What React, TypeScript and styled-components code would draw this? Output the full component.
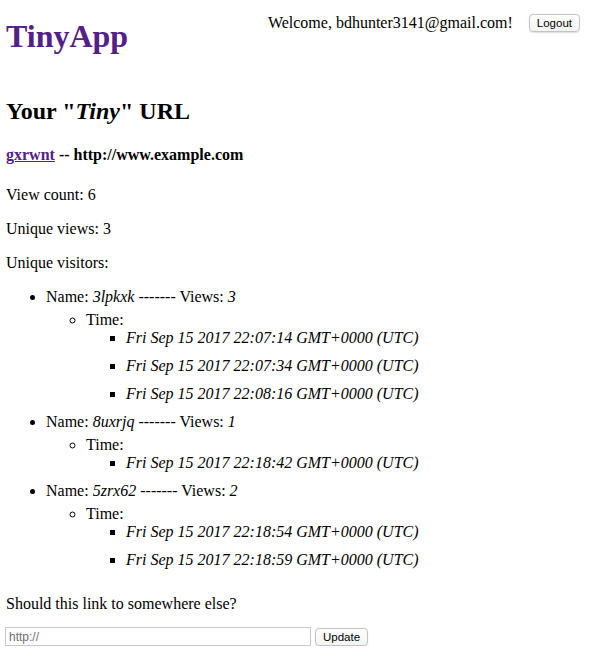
import React, { useState } from 'react';
import styled, { createGlobalStyle } from 'styled-components';

interface Visitor {
  name: string;
  times: string[];
}

const visitors: Visitor[] = [
  {
    name: '3lpkxk',
    times: [
      'Fri Sep 15 2017 22:07:14 GMT+0000 (UTC)',
      'Fri Sep 15 2017 22:07:34 GMT+0000 (UTC)',
      'Fri Sep 15 2017 22:08:16 GMT+0000 (UTC)',
    ],
  },
  {
    name: '8uxrjq',
    times: ['Fri Sep 15 2017 22:18:42 GMT+0000 (UTC)'],
  },
  {
    name: '5zrx62',
    times: [
      'Fri Sep 15 2017 22:18:54 GMT+0000 (UTC)',
      'Fri Sep 15 2017 22:18:59 GMT+0000 (UTC)',
    ],
  },
];

const App: React.FC = () => {
  const [longURL, setLongURL] = useState('');

  const handleSubmit = (e: React.FormEvent) => {
    e.preventDefault();
  };

  return (
    <>
      <GlobalStyle />
      <Header>
        <Brand href="#">TinyApp</Brand>
        <UserBox>
          <span>Welcome, bdhunter3141@gmail.com!</span>
          <MacButton type="button">Logout</MacButton>
        </UserBox>
      </Header>

      <Title>
        Your "<em>Tiny</em>" URL
      </Title>
      <ShortLine>
        <ShortLink href="#">gxrwnt</ShortLink> -- http://www.example.com
      </ShortLine>

      <Stat>View count: 6</Stat>
      <Stat>Unique views: 3</Stat>
      <Stat>Unique visitors:</Stat>

      <VisitorList>
        {visitors.map((v) => (
          <li key={v.name}>
            <VisitorLine>
              Name: <em>{v.name}</em> ------- Views: <em>{v.times.length}</em>
            </VisitorLine>
            <TimeList>
              <li>
                Time:
                <DateList>
                  {v.times.map((t) => (
                    <DateItem key={t}>
                      <em>{t}</em>
                    </DateItem>
                  ))}
                </DateList>
              </li>
            </TimeList>
          </li>
        ))}
      </VisitorList>

      <Question>Should this link to somewhere else?</Question>
      <UpdateForm onSubmit={handleSubmit}>
        <UrlInput
          type="text"
          placeholder="http://"
          value={longURL}
          onChange={(e) => setLongURL(e.target.value)}
        />
        <MacButton type="submit">Update</MacButton>
      </UpdateForm>
    </>
  );
};

const GlobalStyle = createGlobalStyle`
  body {
    margin: 0;
    padding: 0 6px;
    background: #ffffff;
    color: #000000;
    font-family: "Liberation Serif", "Times New Roman", serif;
    font-size: 16px;
  }
`;

const Header = styled.header`
  display: flex;
  justify-content: space-between;
  align-items: flex-start;
  padding-right: 9px;
`;

const Brand = styled.a`
  display: block;
  margin: 18px 0 23px;
  font-size: 32px;
  font-weight: bold;
  color: #522088;
  text-decoration: none;
`;

const UserBox = styled.div`
  display: flex;
  align-items: center;
  gap: 16px;
  margin-top: 14px;
`;

const MacButton = styled.button`
  font-family: "Liberation Sans", Arial, sans-serif;
  font-size: 11.5px;
  color: #000;
  height: 18px;
  padding: 0 7px;
  background: linear-gradient(#ffffff, #f3f3f3);
  border: 1px solid #c3c3c3;
  border-radius: 4px;
  box-shadow: 0 0.5px 1px rgba(0, 0, 0, 0.12);
  cursor: pointer;
`;

const Title = styled.h2`
  margin: 20px 0 21px;
  font-size: 24px;
  font-weight: bold;
`;

const ShortLine = styled.h4`
  margin: 21px 0 22px;
  font-size: 16px;
  font-weight: bold;
`;

const ShortLink = styled.a`
  color: #522088;
  text-decoration: underline;
`;

const Stat = styled.p`
  margin: 16px 0;
`;

const VisitorList = styled.ul`
  margin: 15px 0 26px;
  padding-left: 40px;
  list-style: disc;
`;

const VisitorLine = styled.div`
  margin-bottom: 5px;
`;

const TimeList = styled.ul`
  margin: 0;
  padding-left: 40px;
  list-style: circle;
`;

const DateList = styled.ul`
  margin: 0;
  padding-left: 40px;
  list-style: square;
`;

const DateItem = styled.li`
  margin-bottom: 10px;
`;

const Question = styled.p`
  margin: 16px 0 14px;
`;

const UpdateForm = styled.form`
  display: flex;
  align-items: center;
  gap: 4px;
`;

const UrlInput = styled.input`
  box-sizing: border-box;
  width: 306px;
  height: 19px;
  margin-left: -1px;
  padding: 1px 3px;
  font-family: "Liberation Sans", Arial, sans-serif;
  font-size: 12px;
  border: 1px solid #c8c8c8;
  border-radius: 0;
  outline: none;

  &::placeholder {
    color: #6e6e6e;
  }
`;

export default App;
